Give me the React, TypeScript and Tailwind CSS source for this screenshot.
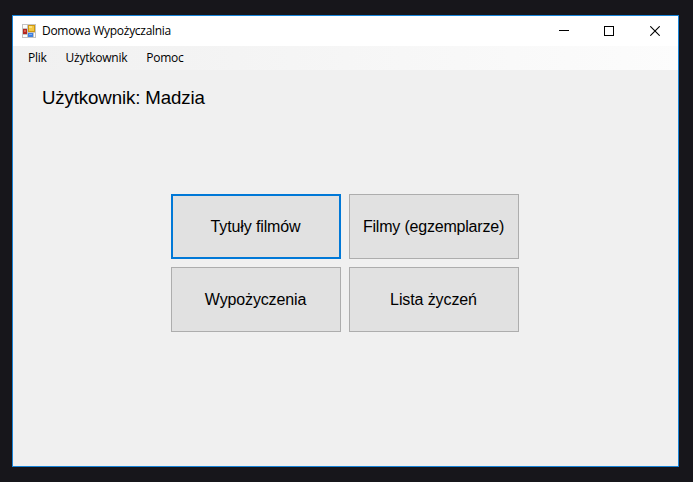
function AppIcon() {
  return (
    <svg className="block shrink-0" width="14" height="14" viewBox="0 0 14 14" shapeRendering="crispEdges">
      <rect width="14" height="14" fill="#c3c3c3" />
      <path d="M1 1h4v3H1zM1 11h4v2H1zM12 9h1v4h-1z" fill="#fdfdfd" />
      <rect x="1" y="5" width="4" height="5" fill="#b5271f" />
      <rect x="2" y="6" width="2" height="2" fill="#d9604f" />
      <rect x="6" y="1" width="7" height="7" fill="#cf980f" />
      <rect x="7" y="2" width="5" height="5" fill="#f3c742" />
      <rect x="7" y="2" width="3" height="2" fill="#fbe07c" />
      <rect x="6" y="9" width="5" height="4" fill="#3f80df" />
      <rect x="7" y="10" width="3" height="1" fill="#80adf2" />
    </svg>
  );
}

function WindowControls() {
  return (
    <div className="ml-auto flex h-full">
      <button aria-label="Minimalizuj" className="flex w-[44px] items-center justify-center">
        <svg width="10" height="10" viewBox="0 0 10 10" shapeRendering="crispEdges">
          <path d="M0 4h10v1H0z" fill="#000" />
        </svg>
      </button>
      <button aria-label="Maksymalizuj" className="flex w-[46px] items-center justify-center">
        <svg width="10" height="10" viewBox="0 0 10 10" shapeRendering="crispEdges">
          <rect x="0.5" y="0.5" width="9" height="9" fill="none" stroke="#000" />
        </svg>
      </button>
      <button aria-label="Zamknij" className="flex w-[46px] items-center justify-center">
        <svg width="10" height="10" viewBox="0 0 10 10">
          <path d="M0.3 0.3l9.4 9.4M9.7 0.3l-9.4 9.4" stroke="#000" strokeWidth="1.1" />
        </svg>
      </button>
    </div>
  );
}

function TileButton({ label, tracking, focused = false }: { label: string; tracking: string; focused?: boolean }) {
  return (
    <button
      className={`flex items-center justify-center whitespace-nowrap bg-[#e1e1e1] pr-px text-[16px] leading-none ${tracking} ${
        focused ? "border-2 border-[#0078d7]" : "border border-[#adadad]"
      }`}
    >
      {label}
    </button>
  );
}

export default function App() {
  return (
    <div className="h-[482px] w-[693px] overflow-hidden bg-[#17161b] pt-[15px] pl-3 text-black">
      <div className="flex h-[452px] w-[667px] flex-col border border-[#1883d7] bg-[#f0f0f0] font-['Liberation_Sans',Arial,sans-serif]">
        <header className="flex h-[30px] shrink-0 items-center bg-white pl-[9px] font-['Open_Sans','Noto_Sans',sans-serif] text-[12px] leading-none">
          <AppIcon />
          <span className="ml-1.5 whitespace-nowrap tracking-[-0.29px]">Domowa Wypożyczalnia</span>
          <WindowControls />
        </header>
        <nav className="flex h-6 shrink-0 items-center gap-[19px] bg-linear-to-r from-[#f0f0f0] to-[#fcfcfc] pl-[15px] font-['Open_Sans','Noto_Sans',sans-serif] text-[12px] leading-none tracking-[-0.25px]">
          <span>Plik</span>
          <span>Użytkownik</span>
          <span>Pomoc</span>
        </nav>
        <main className="flex flex-col">
          <h1 className="mt-[17px] ml-[29px] text-[18.67px] leading-[21px] tracking-[-0.12px]">Użytkownik: Madzia</h1>
          <div className="mt-[86px] ml-[158px] grid grid-cols-[170px_170px] grid-rows-[65px_65px] gap-2">
            <TileButton label="Tytuły filmów" tracking="tracking-[-0.12px]" focused />
            <TileButton label="Filmy (egzemplarze)" tracking="tracking-[-0.2px]" />
            <TileButton label="Wypożyczenia" tracking="tracking-[-0.14px]" />
            <TileButton label="Lista życzeń" tracking="tracking-[-0.1px]" />
          </div>
        </main>
      </div>
    </div>
  );
}
